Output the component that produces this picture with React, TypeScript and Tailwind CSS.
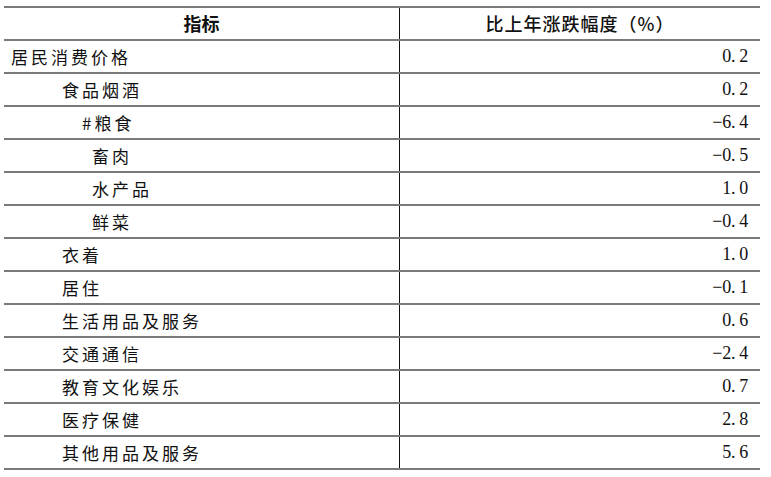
const rows: { name: string; level: 0 | 1 | 2 | 3; value: string }[] = [
  { name: "居民消费价格", level: 0, value: "0. 2" },
  { name: "食品烟酒", level: 1, value: "0. 2" },
  { name: "#粮食", level: 3, value: "−6. 4" },
  { name: "畜肉", level: 2, value: "−0. 5" },
  { name: "水产品", level: 2, value: "1. 0" },
  { name: "鲜菜", level: 2, value: "−0. 4" },
  { name: "衣着", level: 1, value: "1. 0" },
  { name: "居住", level: 1, value: "−0. 1" },
  { name: "生活用品及服务", level: 1, value: "0. 6" },
  { name: "交通通信", level: 1, value: "−2. 4" },
  { name: "教育文化娱乐", level: 1, value: "0. 7" },
  { name: "医疗保健", level: 1, value: "2. 8" },
  { name: "其他用品及服务", level: 1, value: "5. 6" },
]

const indent = {
  0: "pl-[7px]",
  1: "pl-[58px]",
  2: "pl-[88px]",
  3: "pl-[78px]",
}

export default function App() {
  return (
    <div className="w-[771px] h-[477px] bg-white pt-[6px] pl-[4px] font-['Noto_Sans_CJK_SC',sans-serif] text-[#111]">
      <div className="w-[756px] border-t-2 border-[#7a7a7a]">
        {/* header */}
        <div className="flex h-[33px] border-b-2 border-[#7a7a7a]">
          <div className="w-[396px] border-r border-[#111] flex items-center justify-center text-[18px] font-bold">
            指标
          </div>
          <div className="flex-1 flex items-center justify-center text-[18px] font-medium tracking-[1px]">
            比上年涨跌幅度（%）
          </div>
        </div>
        {rows.map((r, i) => (
          <div key={i} className="flex h-[33px] border-b-2 border-[#7a7a7a]">
            <div
              className={`w-[396px] border-r border-[#111] flex items-center text-[17px] tracking-[3px] ${indent[r.level]}`}
            >
              {r.name}
            </div>
            <div className="flex-1 flex items-center justify-end pr-[12px] text-[18px] tracking-[-0.3px] font-['Liberation_Serif',serif]">
              {r.value}
            </div>
          </div>
        ))}
      </div>
    </div>
  )
}
